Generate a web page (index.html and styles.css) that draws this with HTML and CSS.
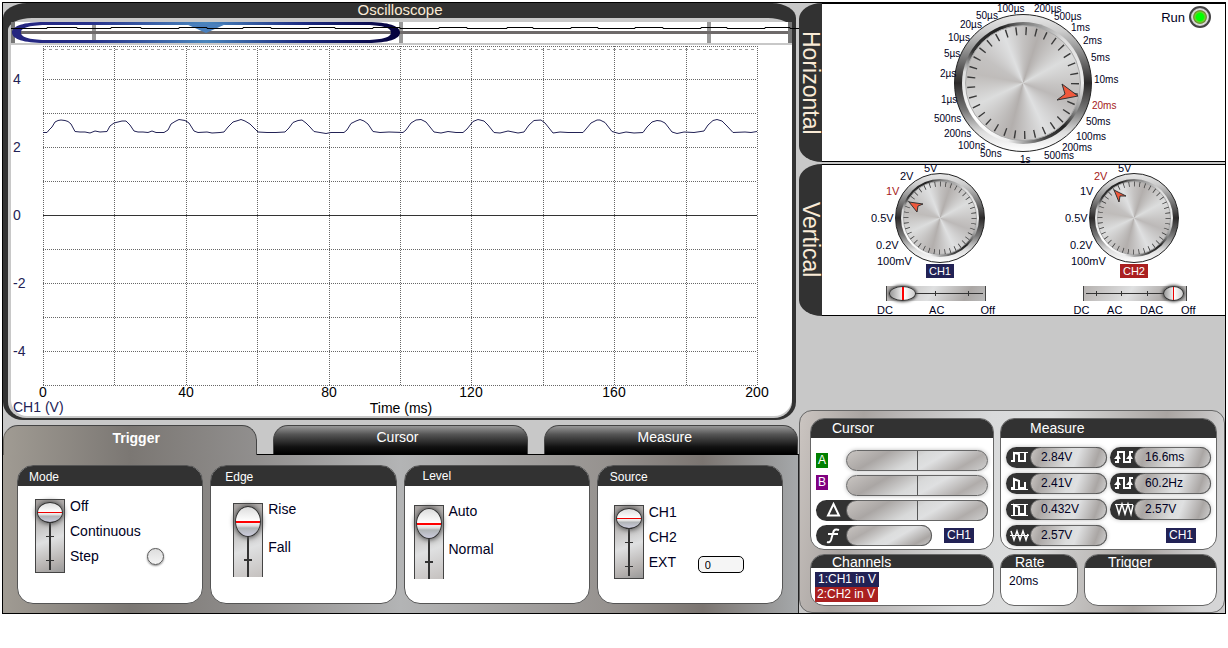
FILE: index.html
```html
<!DOCTYPE html>
<html lang="en">
<head>
<meta charset="utf-8">
<title>Oscilloscope</title>
<link rel="stylesheet" href="styles.css">
</head>
<body>
<main class="app">
  <div class="left">
    <section class="scope">
      <h1 class="scope-title">Oscilloscope</h1>
      <div class="scope-inner">
        <svg class="overview" viewBox="11 22 781 21">
          <defs>
            <linearGradient id="ring" x1="0" x2="1"><stop offset="0" stop-color="#25257f"/><stop offset=".2" stop-color="#26308a"/><stop offset=".5" stop-color="#4a86bd"/><stop offset=".75" stop-color="#1c2a80"/><stop offset="1" stop-color="#04003c"/></linearGradient>
          </defs>
          <rect x="11" y="22" width="781" height="21" fill="#fff"/>
          <path d="M92 22h4v21h-4zM399 22h4v21h-4zM707 22h4v21h-4z" fill="#999"/>
          <path d="M11 22h4v21h-4zM788 22h4v21h-4z" fill="#777"/>
          <path d="M20 31h768v3h-768z" fill="#6e6a6a"/>
          <path fill="url(#ring)" fill-rule="evenodd" d="M44 22H368C388 22 400 26 400 32.500S388 43 368 43H44C24 43 12 39 12 32.500S24 22 44 22ZM48 25C32 25 21 27 21 32.500S32 40 48 40H364C380 40 391 38 391 32.500S380 25 364 25Z"/>
          <path d="M186 24h40l-20 9z" fill="#4a80bd"/>
          <path fill="none" stroke="#000" d="M11 28.500H47V27.500H77V28.500H111V27.500H141V28.500H179V27.500H207V28.500H243V27.500H271V28.500H309V27.500H335V28.500H373V27.500H400V28.500H439V27.500H467V28.500H507V27.500H533V28.500H571V27.500H598V28.500H635V27.500H663V28.500H701V27.500H727V28.500H765V27.500H790V28.500H799"/>
        </svg>
        <svg class="plot" viewBox="11 45 781 371">
          <rect x="11" y="45" width="781" height="371" fill="#fff"/>
          <g fill="none" stroke="#666" stroke-dasharray="1 1">
            <path d="M43 46.500H757M43 79.500H757M43 113.500H757M43 147.500H757M43 181.500H757M43 249.500H757M43 283.500H757M43 317.500H757M43 351.500H757M43 385.500H757"/>
            <path d="M43.500 46V385M114.500 46V385M186.500 46V385M257.500 46V385M329.500 46V385M400.500 46V385M471.500 46V385M543.500 46V385M614.500 46V385M686.500 46V385M757.500 46V385"/>
          </g>
          <path d="M43 49.500H757" stroke="#999" stroke-dasharray="3 3"/>
          <path d="M43 215.500H757" stroke="#333"/>
          <path fill="none" stroke="#222255" stroke-linejoin="round" d="M43 132.500H47L49 130L52 127L55 122L58 120.500L61 120L65 120.500L68 121.500L71 124L75 131.500L80 132L85 132L90 133L95 131L100 132L107 131.500L110 126L114 123L118 122L122 121L126 121L130 125L134 131L138 132L143 132L148 132.500L152 131L156 132.500L164 132.500L168 130L171 124L175 121.500L179 119.500L185 120.500L189 123L194 131L198 132.500L207 132L212 133L220 132.500L224 132L228 127L233 122L238 120.500L241 119.500L245 121L250 124L254 128L258 132L267 132.500L276 132.500L285 132L289 128L293 122.500L298 120.500L302 120L306 123L310 127L314 131.500L320 132.500L326 133.500L331 132.500L344 132.500L347 130L351 123.500L356 121L360 119.500L364 121L368 124L373 131.500L380 132.500L389 132L403 132.500L406 130L411 123L416 120L421 119.500L426 122L430 127L434 132L441 133L448 131.500L456 132.500L463 132.500L467 129L473 121.500L478 119.500L484 121L488 125L494 132.500L500 133L508 131L518 133L524 132L529 125L534 120.500L541 120L545 123L549 128L553 133L560 132L568 132.500L583 132.500L586 129L591 123L597 120L600 120L605 122.500L612 131.500L619 133.500L626 132L634 133L643 132.500L647 127L652 122L657 120.500L661 121L665 123L672 132L677 133.500L684 132L694 132.500L704 131L708 125L713 120.500L717 119.500L722 121L727 126L733 132.500L745 132L751 132.500L757 131.500"/>
          <g class="axis axis-y">
            <text x="13" y="84">4</text><text x="13" y="152">2</text><text x="13" y="220">0</text><text x="13" y="288">-2</text><text x="13" y="356">-4</text>
            <text class="axis-unit" x="13" y="412">CH1 (V)</text>
          </g>
          <g class="axis axis-x">
            <text x="43" y="397">0</text><text x="186" y="397">40</text><text x="329" y="397">80</text><text x="471" y="397">120</text><text x="614" y="397">160</text><text x="757" y="397">200</text>
            <text x="401" y="413">Time (ms)</text>
          </g>
        </svg>
      </div>
    </section>

    <nav class="tabs">
      <button class="tab tab-active" type="button">Trigger</button>
      <button class="tab" type="button">Cursor</button>
      <button class="tab tab-last" type="button">Measure</button>
    </nav>

    <section class="deck">
      <article class="card mode">
        <h2>Mode</h2>
        <div class="card-body">
          <input class="switch" id="mode" type="range" min="0" max="2" value="0" aria-label="Mode">
          <label class="options" for="mode"><span>Off</span><span>Continuous</span><span>Step</span></label>
          <button class="step" type="button" aria-label="Single step"></button>
        </div>
      </article>
      <article class="card edge">
        <h2>Edge</h2>
        <div class="card-body">
          <input class="switch two" id="edge" type="range" min="0" max="1" value="0" aria-label="Edge">
          <label class="options wide" for="edge"><span>Rise</span><span>Fall</span></label>
        </div>
      </article>
      <article class="card level">
        <h2>Level</h2>
        <div class="card-body">
          <input class="switch two" id="level" type="range" min="0" max="1" value="0" aria-label="Level">
          <label class="options wide" for="level"><span>Auto</span><span>Normal</span></label>
        </div>
      </article>
      <article class="card source">
        <h2>Source</h2>
        <div class="card-body">
          <input class="switch" id="source" type="range" min="0" max="2" value="0" aria-label="Source">
          <label class="options" for="source"><span>CH1</span><span>CH2</span><span>EXT</span></label>
          <input class="ext" type="text" value="0" aria-label="External level">
        </div>
      </article>
    </section>
  </div>

  <div class="right">
    <section class="group horizontal">
      <h2 class="group-tab">Horizontal</h2>
      <div class="group-body">
        <div class="knob knob-big">
          <div class="rim"><div class="bevel"><div class="face"></div></div></div>
          <svg viewBox="-100 -79 200 157">
            <circle class="ticks" r="52" pathLength="330" stroke-width="8" stroke-dasharray="1.400 8.600"/>
            <path class="pointer" d="M55 13L39 1L42 11L34 17Z"/>
            <g class="marks small">
              <text x="-26" y="-71">100µs</text><text x="11" y="-71">200µs</text><text x="-47" y="-64">50µs</text><text x="31" y="-63">500µs</text><text x="-63" y="-55">20µs</text><text x="48" y="-52">1ms</text><text x="-75" y="-42">10µs</text><text x="60" y="-39">2ms</text><text x="-79" y="-26">5µs</text><text x="68" y="-22">5ms</text><text x="-83" y="-6">2µs</text><text x="71" y="0">10ms</text><text x="-82" y="20">1µs</text><text class="on" x="69" y="26">20ms</text><text x="-89" y="39">500ns</text><text x="63" y="42">50ms</text><text x="-79" y="54">200ns</text><text x="53" y="57">100ms</text><text x="-65" y="66">100ns</text><text x="39" y="68">200ms</text><text x="-43" y="74">50ns</text><text x="21" y="76">500ms</text><text x="-3" y="80">1s</text>
            </g>
          </svg>
        </div>
        <button class="run" type="button">Run <span class="led"></span></button>
      </div>
    </section>

    <section class="group vertical">
      <h2 class="group-tab">Vertical</h2>
      <div class="group-body channels">
        <div class="channel">
          <div class="knob knob-small">
            <div class="rim"><div class="bevel"><div class="face"></div></div></div>
            <svg viewBox="-70 -53 140 98">
              <circle class="ticks" r="34" pathLength="400" stroke-width="5" stroke-dasharray="1.400 8.600"/>
              <path class="pointer" d="M-31 -16L-17 -14L-22 -12L-23 -6Z"/>
              <g class="marks"><text x="-16" y="-46">5V</text><text x="-40" y="-38">2V</text><text class="on" x="-54" y="-23">1V</text><text x="-69" y="4">0.5V</text><text x="-64" y="31">0.2V</text><text x="-63" y="47">100mV</text></g>
            </svg>
          </div>
          <span class="tag blue">CH1</span>
          <input class="coupling three" id="c1" type="range" min="0" max="2" value="0" aria-label="CH1 coupling">
          <label class="stops" for="c1"><span>DC</span><span>AC</span><span>Off</span></label>
        </div>
        <div class="channel">
          <div class="knob knob-small">
            <div class="rim"><div class="bevel"><div class="face"></div></div></div>
            <svg viewBox="-70 -53 140 98">
              <circle class="ticks" r="34" pathLength="400" stroke-width="5" stroke-dasharray="1.400 8.600"/>
              <path class="pointer" d="M-20 -28L-8 -22L-14 -22L-15 -16Z"/>
              <g class="marks"><text x="-16" y="-46">5V</text><text class="on" x="-40" y="-38">2V</text><text x="-54" y="-23">1V</text><text x="-69" y="4">0.5V</text><text x="-64" y="31">0.2V</text><text x="-63" y="47">100mV</text></g>
            </svg>
          </div>
          <span class="tag red">CH2</span>
          <input class="coupling four" id="c2" type="range" min="0" max="3" value="3" aria-label="CH2 coupling">
          <label class="stops" for="c2"><span>DC</span><span>AC</span><span>DAC</span><span>Off</span></label>
        </div>
      </div>
    </section>

    <section class="readouts">
      <article class="box cursor-box">
        <h2>Cursor</h2>
        <div class="cursor-rows">
          <div class="row"><span class="ab green">A</span><span class="pill split"></span></div>
          <div class="row"><span class="ab purple">B</span><span class="pill split"></span></div>
          <div class="row"><div class="capsule"><svg class="sym" viewBox="0 0 30 21"><path d="M17.500 4L23 15.500H12Z" stroke-width="2"/></svg><span class="pill split"></span></div></div>
          <div class="row"><div class="capsule short"><svg class="sym" viewBox="0 0 30 21"><path d="M23 5Q18 3 17 8L15 15Q14 18 11 17M12 9H22" stroke-width="2"/></svg><span class="pill"></span></div><span class="tag blue">CH1</span></div>
        </div>
      </article>
      <article class="box measure-box">
        <h2>Measure</h2>
        <div class="measures">
          <div class="meter"><svg viewBox="0 0 24 21"><path d="M7 5.500H22" stroke-width="1"/><path d="M5 14H8V6L13 7V9M13 9V14H19V6"/></svg><span>2.84V</span></div>
          <div class="meter"><svg viewBox="0 0 24 21"><path d="M5 15H8V5H14V15H20V5H23"/><path d="M4 12L8 7L11 12ZM16 12L20 7L23 12Z" fill="#fff" stroke="none"/></svg><span>16.6ms</span></div>
          <div class="meter"><svg viewBox="0 0 24 21"><path d="M5 16.500H22" stroke-width="1"/><path d="M5 15H8V6L13 8V15H19V9"/></svg><span>2.41V</span></div>
          <div class="meter"><svg viewBox="0 0 24 21"><path d="M5 15H8V5H14V15H20V5H23"/><path d="M4 12L8 7L11 12ZM16 12L20 7L23 12Z" fill="#fff" stroke="none"/></svg><span>60.2Hz</span></div>
          <div class="meter"><svg viewBox="0 0 24 21"><path d="M5 5.500H22M5 16.500H22" stroke-width="1"/><path d="M8 16V6L13 8V15H19V6"/></svg><span>0.432V</span></div>
          <div class="meter"><svg viewBox="0 0 24 21"><path d="M5 5.500H23" stroke-width="1"/><path stroke-width="1.500" d="M6 5L9 15L12 5L15 15L18 5L21 15L23 6"/></svg><span>2.57V</span></div>
          <div class="meter"><svg viewBox="0 0 24 21"><path d="M4 10.500H23" stroke-width="1"/><path stroke-width="1.500" d="M5 6L8 15L11 6L14 15L17 6L20 15L22 9"/></svg><span>2.57V</span></div>
          <span class="tag blue">CH1</span>
        </div>
      </article>
      <article class="box low channels-box">
        <h2>Channels</h2>
        <div class="channel-list"><span class="tag blue">1:CH1 in V</span><span class="tag red">2:CH2 in V</span></div>
      </article>
      <article class="box low rate-box"><h2>Rate</h2><p>20ms</p></article>
      <article class="box low trigger-box"><h2>Trigger</h2></article>
    </section>
  </div>
</main>
</body>
</html>
```
FILE: styles.css
```css
* { box-sizing: border-box; }
body {
  margin: 0;
  padding: 2px;
  background: #fff;
  font-family: "Liberation Sans", Arial, sans-serif;
  font-size: 12px;
  color: #000022;
}
h1, h2, p { margin: 0; font-weight: normal; }
button, input { font-family: inherit; margin: 0; }
svg { display: block; overflow: visible; }

.app {
  display: grid;
  grid-template-columns: minmax(0, 1fr) 426px;
  border: 1px solid #000;
  background: #c8c8c8;
}
.left { display: flex; flex-direction: column; }

/* Trace display */
.scope {
  margin-right: 3px;
  padding: 0 4px 2px 5px;
  background: #323232;
  border-radius: 24px 24px 20px 20px / 15px 15px 18px 18px;
}
.scope-title { height: 15px; line-height: 14px; font-size: 15px; text-align: center; color: #faebd7; }
.scope-inner {
  display: grid;
  row-gap: 2px;
  padding: 4px 0 2px 3px;
  background: #c8c8c8;
  border-radius: 24px 24px 18px 18px / 12px 12px 16px 16px;
}
.overview { width: 100%; }
.plot { width: 100%; overflow: hidden; border-radius: 0 0 18px 16px; }
.axis { font-size: 14px; fill: #000; }
.axis-y { fill: #222255; }
.axis-x { text-anchor: middle; }

/* Tabs and trigger cards */
.tabs { display: grid; grid-template-columns: repeat(3, 1fr); column-gap: 16px; margin: 5px 1px 0 0; }
.tab {
  height: 29px;
  padding: 0 6px 6px 0;
  border: 1px solid #444;
  border-bottom: 0;
  border-radius: 15px 15px 0 0;
  background: linear-gradient(#999, #555 30%, #111 75%, #000);
  color: #fff;
  font-size: 14px;
}
.tab-last { padding-right: 12px; }
.tab-active {
  position: relative;
  height: 30px;
  margin-bottom: -1px;
  padding: 0 0 5px 12px;
  border-left-color: #6d6963;
  background: linear-gradient(90deg, #a09b93, #7b7773 50%, #918f8e);
  font-weight: bold;
}
.deck {
  flex: 1;
  display: grid;
  grid-template-columns: repeat(4, 1fr);
  column-gap: 7px;
  padding: 10px 15px 8px 14px;
  border-top: 1px solid #000;
  border-right: 1px solid #222;
  background: linear-gradient(90deg, #a09b93, #7b7773 16%, #918f8e 32%, #b3b4b5 50%, #96928f 76%, #7b7571 88%, #a5a8aa);
}
.card { height: 139px; border: 1px solid #555; border-radius: 16px; background: #fff; overflow: hidden; }
.card h2 { height: 20px; padding-left: 11px; background: #323232; color: #fff; font-size: 12px; line-height: 22px; }
.card-body { display: flex; padding: 13px 0 0 17px; column-gap: 5px; align-items: flex-start; font-size: 14px; }
.edge h2 { padding-left: 14px; }
.edge .card-body { padding: 17px 0 0 22px; }
.level h2 { padding-left: 18px; line-height: 20px; }
.level .card-body { padding: 19px 0 0 9px; }
.source h2 { padding-left: 12px; }
.source .card-body { padding: 19px 0 0 16px; }
.options { display: flex; flex-direction: column; width: 76px; margin-top: -5px; }
.options span { line-height: 25px; }
.options.wide span { line-height: 38px; }
.options.wide { margin-top: -13px; }

.switch {
  appearance: none;
  writing-mode: vertical-lr;
  width: 30px;
  height: 74px;
  padding: 2px 0;
  border: solid #444;
  border-width: 1px;
  background:
    linear-gradient(#333, #333) 50% 36px / 8px 1px no-repeat,
    linear-gradient(#333, #333) 50% 60px / 8px 1px no-repeat,
    linear-gradient(#333, #333) 50% 4px / 2px 66px no-repeat,
    linear-gradient(160deg, #a9a4a2, #bebcbb 30%, #dfe0e1 55%, #b5b1af 85%, #999);
}
.switch.two {
  border-bottom: 0;
  background:
    linear-gradient(#333, #333) 50% 55px / 8px 2px no-repeat,
    linear-gradient(#333, #333) 50% 4px / 2px 70px no-repeat,
    linear-gradient(160deg, #a9a4a2, #bebcbb 30%, #dfe0e1 60%, #c5c1bf);
}
.switch::-webkit-slider-thumb {
  appearance: none;
  width: 26px;
  height: 21px;
  border: 1px solid #333;
  border-radius: 50%;
  background: linear-gradient(#ddd, #fff 9px, #e00 9px, #e00 10px, #f4f4f4 10px, #ddd 12px, #b0b4b6 13px, #ccd);
  box-shadow: 0 0 5px 1px #555;
}
.switch.two::-webkit-slider-thumb {
  height: 31px;
  background: linear-gradient(#ddd, #fff 14px, #f00 14px, #f00 16px, #f4f4f4 16px, #ddd 19px, #b0b4b6 21px, #ccd);
}
.step {
  align-self: flex-end;
  width: 17px;
  height: 17px;
  margin-bottom: 8px;
  padding: 0;
  border: 1px solid #555;
  border-radius: 50%;
  background: linear-gradient(#ddd, #f4f4f4);
  box-shadow: 0 1px 2px #888;
}
.mode .options { width: 72px; }
.ext {
  align-self: flex-end;
  width: 46px;
  height: 17px;
  margin: 0 0 6px -32px;
  padding: 0 6px;
  border: 1px solid #000;
  border-radius: 5px;
  background: #f5f5f5;
  font-size: 11px;
}

/* Knob groups */
.right { display: flex; flex-direction: column; }
.group { display: flex; }
.group-tab {
  width: 23px;
  writing-mode: vertical-rl;
  border-radius: 23px 0 0 23px / 16px 0 0 16px;
  background: #323232;
  color: #faebd7;
  font-size: 23px;
  line-height: 23px;
  text-align: center;
}
.group-body { flex: 1; border: solid #000; border-width: 1px 0; background: #fff; }
.horizontal .group-body { display: grid; justify-content: center; align-content: center; height: 159px; position: relative; padding-right: 2px; }
.vertical { margin-top: 2px; }
.knob { display: grid; justify-items: center; }
.knob > * { grid-area: 1 / 1; }
.knob-big svg { width: 200px; height: 157px; }
.knob-small svg { width: 140px; height: 98px; }
.knob-big .rim { width: 138px; height: 138px; margin-top: 10px; }
.knob-small .rim { width: 90px; height: 90px; margin-top: 8px; }
.rim {
  display: grid;
  padding: 7px;
  border: 1px solid #222;
  border-radius: 50%;
  background: linear-gradient(#e8e8e8, #ccc 12%, #888 28%, #2c2a2a 50%, #777 70%, #ddd 86%, #fff);
}
.knob-small .rim { padding: 5px; }
.bevel {
  display: grid;
  padding: 3px;
  border-radius: 50%;
  background: conic-gradient(#777, #ddd 12%, #eee 25%, #999 32%, #222 38%, #444 44%, #eee 54%, #fff 65%, #ddd 78%, #333 84%, #222 94%, #777);
}
.knob-small .bevel { padding: 2px; }
.face {
  border: 1px solid #aaa;
  border-radius: 50%;
  background: conic-gradient(#c4c2c1, #b3afad 5%, #dcdddd 17%, #c6c4c3 26%, #bcb9b8 31%, #dfe0e1 43%, #b3afad 54%, #dcdddd 68%, #bfbcba 78%, #c4c2c1 84%, #dfe0e1 94%, #c4c2c1);
}
.ticks { fill: none; stroke: #3a3a3a; }
.pointer { fill: #f0583c; stroke: #333; stroke-width: 1; }
.marks { font-size: 11px; fill: #000022; }
.marks.small { font-size: 10px; }
.marks .on { fill: #a52020; }
.run {
  position: absolute;
  top: 2px;
  right: 14px;
  display: flex;
  align-items: center;
  column-gap: 4px;
  padding: 0;
  border: 0;
  background: none;
  color: #000022;
  font-size: 13px;
}
.led { width: 22px; height: 22px; border: 2px solid #444; border-radius: 50%; background: radial-gradient(circle, #0f0 28%, #6fcf30 40%, #6a8a30 50%, #ddd 58%, #999); }

.channels { display: flex; justify-content: space-between; padding: 0 21px 0 48px; height: 152px; }
.channel { display: flex; flex-direction: column; align-items: center; width: 140px; }
.tag { padding: 0 3px; color: #fff; line-height: 15px; }
.channel .tag { font-size: 11px; line-height: 14px; margin-top: 1px; }
.blue { background: #222255; }
.red { background: #aa2020; }
.coupling {
  appearance: none;
  width: 100px;
  height: 15px;
  margin-top: 8px;
  padding: 0 2px;
  border: solid #444;
  border-width: 0 1px;
}
.three {
  margin-left: -8px;
  background:
    linear-gradient(#333, #333) 48px 50% / 1px 5px no-repeat,
    linear-gradient(#333, #333) 81px 50% / 1px 5px no-repeat,
    linear-gradient(#333, #333) 2px 50% / 94px 1px no-repeat,
    linear-gradient(120deg, #b5b1af, #dfe0e1 45%, #aaa6a4 80%, #bbb);
}
.four {
  width: 104px;
  margin-left: 2px;
  background:
    linear-gradient(#333, #333) 12px 50% / 1px 5px no-repeat,
    linear-gradient(#333, #333) 37px 50% / 1px 5px no-repeat,
    linear-gradient(#333, #333) 63px 50% / 1px 5px no-repeat,
    linear-gradient(#333, #333) 2px 50% / 98px 1px no-repeat,
    linear-gradient(120deg, #b5b1af, #dfe0e1 45%, #aaa6a4 80%, #bbb);
}
.coupling::-webkit-slider-thumb {
  appearance: none;
  width: 27px;
  height: 15px;
  border: 1px solid #333;
  border-radius: 50%;
  background: linear-gradient(90deg, #999, #eee 12px, #f00 12px, #f00 14px, #fff 14px, #ccc);
  box-shadow: 0 0 3px 1px #555;
}
.four::-webkit-slider-thumb {
  width: 21px;
  background: linear-gradient(90deg, #999, #eee 9px, #e00 9px, #e00 10px, #fff 10px, #ccc);
}
.stops { display: flex; justify-content: space-between; width: 118px; margin-top: 4px; margin-left: -8px; font-size: 11px; line-height: 11px; }
.four + .stops { width: 122px; margin-left: 1px; }

/* Readouts */
.readouts {
  display: grid;
  grid-template-columns: 184px 78px minmax(0, 1fr);
  grid-template-rows: 132px 52px;
  gap: 4px 6px;
  margin-top: 94px;
  padding: 7px 7px 6px 10px;
  border: 1px solid #666;
  border-radius: 13px;
  background: linear-gradient(100deg, #cbc5c1, #a9a4a1 14%, #b9b6b5 22%, #d9dadb 42%, #dcdddd 55%, #a9a4a1 80%, #d5d5d6 95%);
}
.box { border: 1px solid #666; border-radius: 14px; background: #fff; overflow: hidden; }
.box h2 { height: 19px; padding-left: 21px; background: #323232; color: #fff; font-size: 14px; line-height: 19px; }
.low h2 { height: 13px; line-height: 15px; overflow: hidden; }
.measure-box { grid-column: 2 / 4; }
.measure-box h2 { padding-left: 29px; }
.rate-box h2 { padding-left: 14px; }
.trigger-box h2 { padding-left: 23px; }
.rate-box p { padding: 6px 8px; line-height: 14px; }
.cursor-rows { display: grid; row-gap: 4px; padding: 12px 5px 0; }
.row { display: flex; justify-content: space-between; align-items: center; height: 21px; }
.row .tag { margin-right: 14px; }
.ab { padding: 0 2px; color: #fff; line-height: 15px; }
.green { background: #008000; }
.purple { align-self: flex-start; background: #800080; }
.pill {
  width: 142px;
  height: 21px;
  border: 1px solid #666;
  border-radius: 11px;
  background: linear-gradient(150deg, #c9c5c2, #b0acaa 25%, #dcdddd 50%, #dfe0e1 60%, #aaa6a4 85%, #c8c8c8);
  box-shadow: 0 0 4px #bbb;
}
.split { background: linear-gradient(#555, #555) 50% 0 / 1px 100% no-repeat, linear-gradient(150deg, #c9c5c2, #aaa6a4 25%, #d8d9d9 48%, #dfe0e1 60%, #b0acaa 82%, #d0d0d0); }
.capsule { display: flex; border-radius: 11px; background: #323232; }
.capsule .pill { flex: 1; box-shadow: none; }
.capsule:not(.short) { width: 100%; }
.capsule.short .pill { flex: none; width: 86px; }
.sym { width: 30px; height: 21px; fill: none; stroke: #fff; }
.measures { display: grid; grid-template-columns: 1fr 1fr; gap: 5px 3px; padding: 9px 5px 0; }
.meter { display: flex; height: 21px; border-radius: 11px; background: #323232; box-shadow: 0 0 4px #bbb; }
.meter svg { width: 24px; height: 21px; fill: none; stroke: #fff; stroke-width: 2; }
.meter span {
  flex: 1;
  padding-left: 10px;
  border: 1px solid #666;
  border-radius: 11px;
  background: linear-gradient(110deg, #c9c5c2, #aaa6a4 15%, #dcdddd 50%, #dfe0e1 60%, #aaa6a4 85%, #d0d0d0);
  line-height: 19px;
}
.measures .tag { justify-self: end; align-self: center; margin-right: 15px; }
.channel-list { display: flex; flex-direction: column; align-items: flex-start; padding: 4px 4px 0; }
.channel-list .red { padding: 0 3px 0 2px; }
```
